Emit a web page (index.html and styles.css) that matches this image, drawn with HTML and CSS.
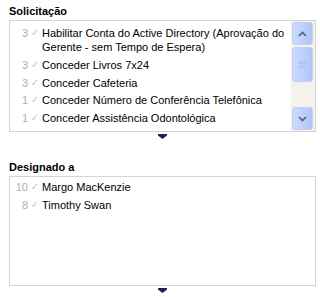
FILE: index.html
```html
<!DOCTYPE html>
<html lang="pt">
<head>
    <meta charset="UTF-8">
    <title>Solicitação</title>
    <link rel="stylesheet" href="styles.css">
</head>
<body>
    <div class="field">
        <h3>Solicitação</h3>
        <div class="list-box">
            <div class="list">
                <div class="item"><span class="count">3</span><span class="check">✓</span><span class="label">Habilitar Conta do Active Directory (Aprovação do Gerente - sem Tempo de Espera)</span></div>
                <div class="item"><span class="count">3</span><span class="check">✓</span><span class="label">Conceder Livros 7x24</span></div>
                <div class="item"><span class="count">3</span><span class="check">✓</span><span class="label">Conceder Cafeteria</span></div>
                <div class="item"><span class="count">1</span><span class="check">✓</span><span class="label">Conceder Número de Conferência Telefônica</span></div>
                <div class="item"><span class="count">1</span><span class="check">✓</span><span class="label">Conceder Assistência Odontológica</span></div>
                <div class="item"><span class="count">1</span><span class="check">✓</span><span class="label">Conceder Conta de Correio</span></div>
            </div>
            <div class="scrollbar">
                <div class="sb-btn">
                    <svg width="9" height="6" viewBox="0 0 9 6"><path d="M1 5 L4.5 1.5 L8 5" fill="none" stroke="#4d6185" stroke-width="1.6"/></svg>
                </div>
                <div class="sb-thumb">
                    <svg width="7" height="7" viewBox="0 0 7 7"><path d="M0 0.5h7M0 2.5h7M0 4.5h7M0 6.5h7" stroke="#a9bff0" stroke-width="1"/></svg>
                </div>
                <div class="sb-track"></div>
                <div class="sb-btn">
                    <svg width="9" height="6" viewBox="0 0 9 6"><path d="M1 1 L4.5 4.5 L8 1" fill="none" stroke="#4d6185" stroke-width="1.6"/></svg>
                </div>
            </div>
        </div>
        <div class="resize">
            <svg width="9" height="5" viewBox="0 0 9 5"><path d="M0 0h9v1.5L4.5 5 0 1.5z" fill="#1a1f5e"/></svg>
        </div>
    </div>

    <div class="field">
        <h3>Designado a</h3>
        <div class="list-box tall">
            <div class="list">
                <div class="item"><span class="count">10</span><span class="check">✓</span><span class="label">Margo MacKenzie</span></div>
                <div class="item"><span class="count">8</span><span class="check">✓</span><span class="label">Timothy Swan</span></div>
            </div>
        </div>
        <div class="resize">
            <svg width="9" height="5" viewBox="0 0 9 5"><path d="M0 0h9v1.5L4.5 5 0 1.5z" fill="#1a1f5e"/></svg>
        </div>
    </div>
</body>
</html>
```

FILE: styles.css
```css
body {
    margin: 0;
    padding: 4px 4px 0 9px;
    background: #fff;
    font-family: "Liberation Sans", Arial, sans-serif;
    font-size: 11px;
    color: #000;
}

h3 {
    margin: 0 0 2px 0;
    font-size: 11px;
    font-weight: bold;
    line-height: 14px;
}

.field {
    margin-bottom: 20px;
}

.field:last-child {
    margin-bottom: 0;
}

.list-box {
    display: flex;
    height: 110px;
    border: 1px solid #d4d4d4;
    overflow: hidden;
}

.list-box.tall {
    height: 108px;
}

.list {
    flex: 1;
    padding: 4px 0 0 0;
    overflow: hidden;
}

.tall .list {
    padding-top: 2px;
}

.item {
    display: flex;
    align-items: flex-start;
    line-height: 14px;
    padding: 1px 0 2px 0;
}

.item + .item {
    padding-top: 2px;
    padding-bottom: 1.5px;
}

.count {
    width: 18px;
    text-align: right;
    color: #b0b0b0;
    flex-shrink: 0;
}

.check {
    width: 14px;
    text-align: center;
    color: #c8c8c8;
    font-family: "DejaVu Sans", sans-serif;
    font-size: 10px;
    flex-shrink: 0;
}

.label {
    flex: 1;
}

.scrollbar {
    width: 24px;
    display: flex;
    flex-direction: column;
    background: #f4f2ea;
    padding: 1px 2px 1px 1px;
    box-sizing: border-box;
    flex-shrink: 0;
}

.sb-btn,
.sb-thumb {
    display: flex;
    align-items: center;
    justify-content: center;
    border: 1px solid #bfd0f5;
    border-radius: 3px;
    background: linear-gradient(to right, #cbdaff, #bccffc 60%, #aec4f7);
}

.sb-btn {
    height: 21px;
}

.sb-thumb {
    height: 33px;
    margin-top: 2px;
}

.sb-track {
    flex: 1;
}

.resize {
    display: flex;
    justify-content: center;
    height: 6px;
    padding-top: 2px;
}
```
